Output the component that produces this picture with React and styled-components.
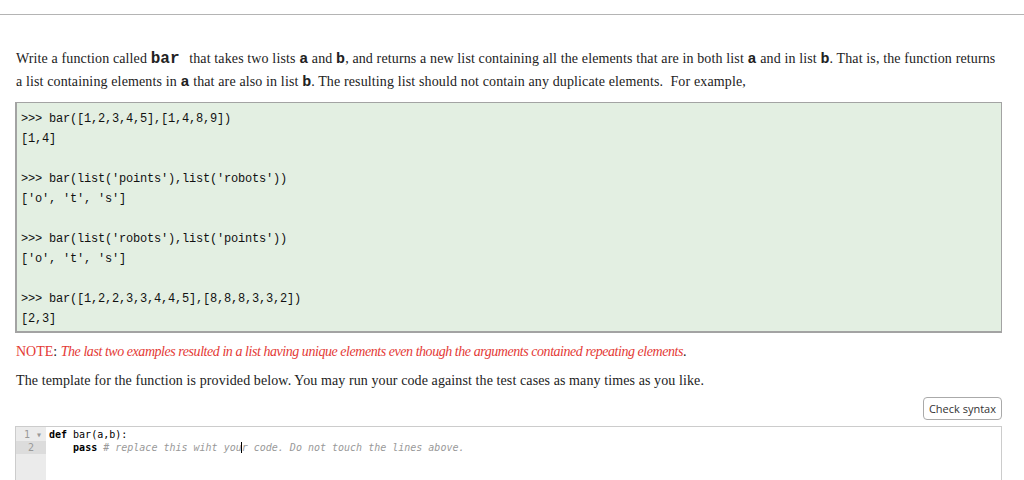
import React from 'react';
import styled, { createGlobalStyle } from 'styled-components';

const GlobalStyle = createGlobalStyle`
  body {
    margin: 0;
    background: #fff;
    font-family: "Liberation Serif", serif;
    color: #222;
  }
`;

const Page = styled.div`
  border-top: 1px solid #b4b4b4;
  margin-top: 14px;
  padding: 33px 22px 0 15px;
`;

const Para = styled.p`
  margin: 0 0 0 1px;
  font-size: 14px;
  line-height: 22px;
  letter-spacing: 0.13px;
  white-space: nowrap;
`;

const Tt = styled.code`
  font-family: "Liberation Mono", monospace;
  font-weight: bold;
  letter-spacing: 0;
  font-size: ${(p) => (p.big ? '16px' : '15px')};
  margin-right: ${(p) => (p.big ? '6px' : '0')};
`;

const Examples = styled.pre`
  margin: 8px 0 0;
  background: #e3efe2;
  border: 1px solid #a3a3a3;
  border-left-width: 2px;
  border-bottom-width: 2px;
  padding: 6px 4px 2px;
  font-family: "Liberation Mono", monospace;
  font-size: 12px;
  line-height: 20px;
  letter-spacing: -0.2px;
  color: #111;
`;

const Note = styled.p`
  margin: 8px 0 0 1px;
  font-size: 14px;
  line-height: 22px;
  color: #e43a36;
  white-space: nowrap;
  em {
    font-style: italic;
    letter-spacing: -0.45px;
  }
  span {
    color: #222;
  }
`;

const Template = styled(Para)`
  margin-top: 7px;
  letter-spacing: 0.1px;
`;

const Toolbar = styled.div`
  display: flex;
  justify-content: flex-end;
  margin-top: 5px;
`;

const Button = styled.button`
  font-family: "Open Sans", "Liberation Sans", sans-serif;
  font-size: 11px;
  color: #333;
  background: #fff;
  border: 1px solid #aaa;
  border-radius: 4px;
  padding: 0 5px;
  height: 23px;
`;

const Editor = styled.div`
  margin-top: 6px;
  border: 1px solid #ccc;
  display: flex;
  height: 60px;
  font-family: "DejaVu Sans Mono", monospace;
  font-size: 10px;
  line-height: 13px;
`;

const Gutter = styled.div`
  width: 30px;
  background: #ebebeb;
  padding-top: 1px;
`;

const LineNo = styled.div`
  background: ${(p) => (p.active ? '#dcdcdc' : 'transparent')};
  color: #999;
  text-align: right;
  padding-right: ${(p) => (p.fold ? '4px' : '12px')};
`;

const Code = styled.div`
  flex: 1;
  padding: 1px 0 0 3px;
  white-space: pre;
  color: #000;
`;

const Kw = styled.b`
  font-weight: bold;
`;

const Comment = styled.span`
  color: #999;
  font-style: italic;
`;

const Caret = styled.span`
  border-left: 1px solid #000;
  margin-left: -1px;
`;

const examples = [
  [">>> bar([1,2,3,4,5],[1,4,8,9])", "[1,4]"],
  [">>> bar(list('points'),list('robots'))", "['o', 't', 's']"],
  [">>> bar(list('robots'),list('points'))", "['o', 't', 's']"],
  [">>> bar([1,2,2,3,3,4,4,5],[8,8,8,3,3,2])", "[2,3]"],
];

export default function App() {
  return (
    <>
      <GlobalStyle />
      <Page>
        <Para>
          Write a function called <Tt big>bar</Tt> that takes two lists <Tt>a</Tt> and <Tt>b</Tt>, and returns a new list containing all the elements that are in both list <Tt>a</Tt> and in list <Tt>b</Tt>. That is, the function returns
          <br />
          a list containing elements in <Tt>a</Tt> that are also in list <Tt>b</Tt>. The resulting list should not contain any duplicate elements.&nbsp; For example,
        </Para>
        <Examples>
          {examples.map((ex, i) => (
            <React.Fragment key={i}>
              {ex[0]}
              {'\n'}
              {ex[1]}
              {i < examples.length - 1 ? '\n\n' : ''}
            </React.Fragment>
          ))}
        </Examples>
        <Note>
          NOTE<span>:</span> <em>The last two examples resulted in a list having unique elements even though the arguments contained repeating elements</em><span>.</span>
        </Note>
        <Template>
          The template for the function is provided below. You may run your code against the test cases as many times as you like.
        </Template>
        <Toolbar>
          <Button>Check syntax</Button>
        </Toolbar>
        <Editor>
          <Gutter>
            <LineNo fold>1 ▾</LineNo>
            <LineNo active>2</LineNo>
          </Gutter>
          <Code>
            <Kw>def</Kw> bar(a,b):{'\n'}
            {'    '}<Kw>pass</Kw> <Comment># replace this wiht you<Caret />r code. Do not touch the lines above.</Comment>
          </Code>
        </Editor>
      </Page>
    </>
  );
}
